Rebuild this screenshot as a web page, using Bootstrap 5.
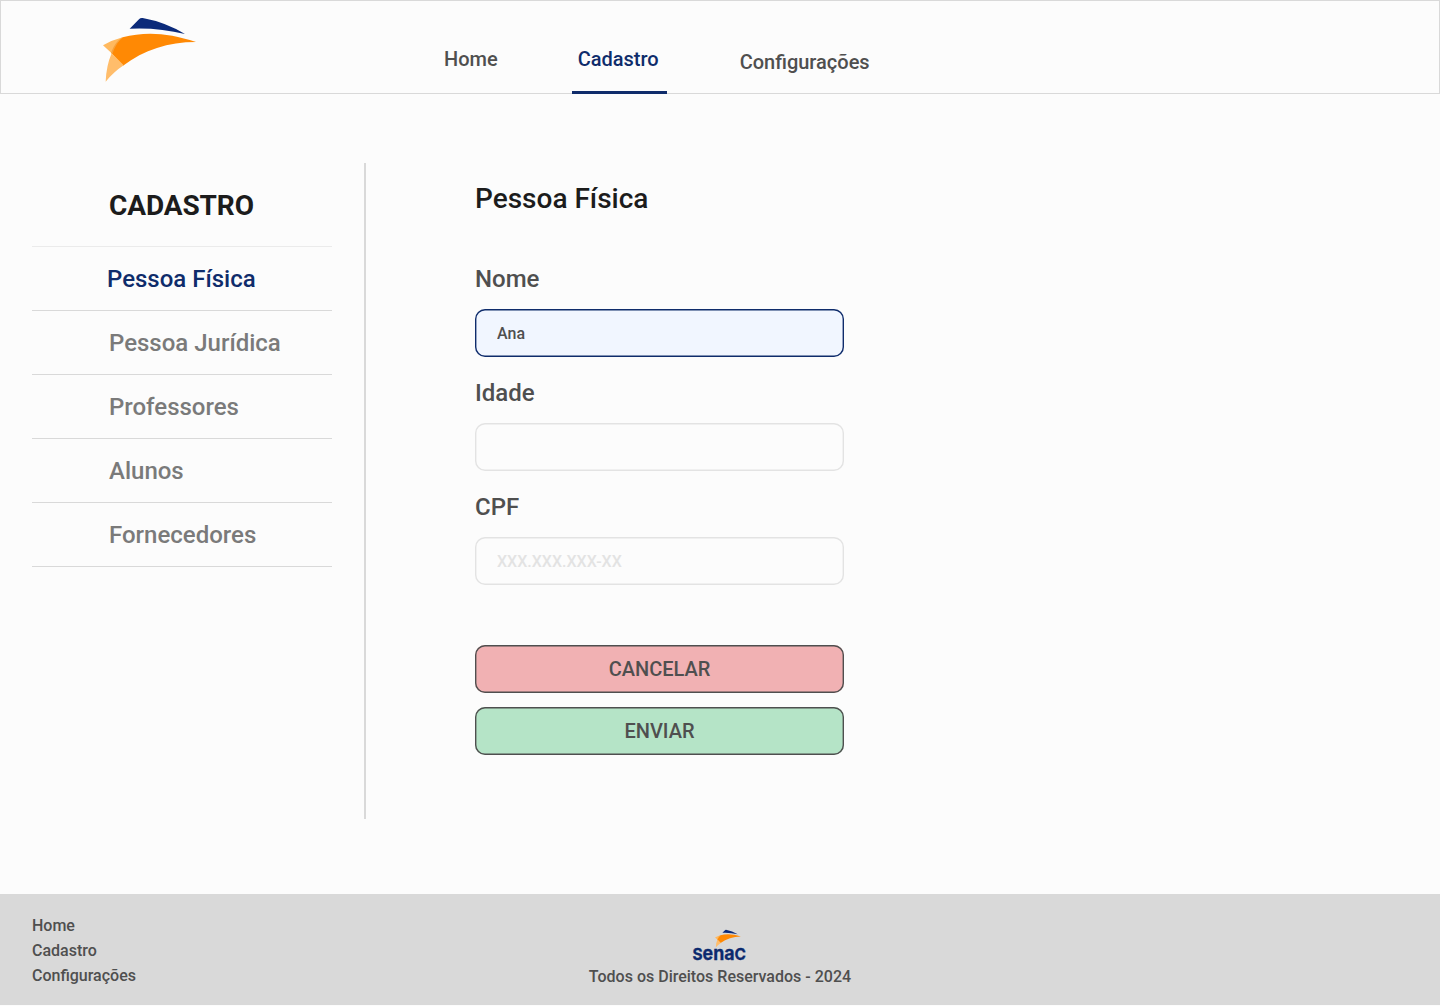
<!DOCTYPE html>
<html lang="pt-BR">
<head>
<meta charset="utf-8">
<meta name="viewport" content="width=device-width, initial-scale=1">
<title>Cadastro - Pessoa Física</title>
<link href="https://cdn.jsdelivr.net/npm/bootstrap@5.3.0/dist/css/bootstrap.min.css" rel="stylesheet">
<style>
  body { font-family: Roboto, sans-serif; font-weight: 500; color: #4f4f4f; background: #fcfcfc; height: 1005px; }
  .topbar { height: 94px; border: 1px solid #d9d9d9; padding: 0 0 0 89px; }
  .brand-mark { width: 120px; height: 86px; margin: 7px 0 0; display: block; flex: none; }
  .topnav { margin-left: 234px; height: 93px; font-size: 20px; line-height: 24px; }
  .topnav .nav-link { color: #4f4f4f; padding: 46px 0 0; }
  .topnav .nav-link.active { color: #0f2c6b; width: 95px; margin: 0 73px 0 74px; padding-left: 6px; border-bottom: 3px solid #0f2c6b; }
  .topnav .nav-link.settings { padding-top: 49px; }
  .page-area { height: 800px; padding-top: 69px; }
  .side { width: 366px; height: 656px; padding: 0 32px; border-right: 2px solid #d9d9d9; }
  .side h1 { font-size: 28px; line-height: 34px; font-weight: 700; letter-spacing: -.1px; color: #1c1c1c; margin: 0; padding: 26px 0 23px 77px; border-bottom: 1px solid #ebebeb; }
  .side .list-group-item { height: 64px; border: 0; border-bottom: 1px solid #d9d9d9 !important; border-radius: 0; background: none; color: #7a7a7a; font-size: 24px; line-height: 28px; padding: 18px 0 0 77px; }
  .side .list-group-item.active { color: #0f2c6b; padding-left: 75px; margin: 0; }
  .form-area { width: 369px; margin-left: 109px; }
  .form-area h2 { font-size: 28px; line-height: 34px; font-weight: 500; color: #1c1c1c; margin: 19px 0 49px; }
  .form-label { font-size: 24px; line-height: 28px; margin: 0 0 16px; display: block; }
  .form-control { height: 48px; border: 0; box-shadow: inset 0 0 0 1.4px #e3e3e3; border-radius: 10px; background: #fcfcfc; font-size: 16px; font-weight: 500; color: #4f4f4f; padding: 1px 22px 0; margin-bottom: 22px; }
  .form-control::placeholder { color: #e3e3e3; opacity: 1; }
  .form-control.filled { background: #f1f6ff; box-shadow: inset 0 0 0 1.4px #0f2c6b; }
  .form-area .btn { height: 48px; width: 369px; border: 0; box-shadow: inset 0 0 0 1.4px #4f4f4f; border-radius: 10px; color: #4f4f4f; font-size: 20px; font-weight: 500; line-height: 24px; padding: 0; }
  .form-actions { gap: 14px; padding-top: 38px; }
  .btn-cancelar { background: #f1b1b3; }
  .btn-enviar { background: #b5e4c7; }
  .foot { height: 111px; background: #d9d9d9; font-size: 16px; line-height: 25px; padding: 19px 32px 0; }
  .foot a { color: #4f4f4f; text-decoration: none; }
  .foot-center { padding-top: 11px; line-height: 19px; }
  .foot-logo { width: 80px; height: 44px; display: block; margin: 3px auto -4px; overflow: visible; }
</style>
</head>
<body class="d-flex flex-column">
<svg width="0" height="0" class="d-none" aria-hidden="true">
  <symbol id="sail" viewBox="0 0 360 258">
    <path fill="#0b2a7a" d="M119 62 L147 34 Q151 29 158 30 Q225 42 285 78 Q205 58 119 62Z"/>
    <path fill="#ff8904" d="M98 88 C165 70 235 74 318 102 C235 102 162 126 99 173 L63 134 C72 112 82 98 98 88Z"/>
    <path fill="#ffb95f" d="M39 112 Q67 96 98 88 Q76 105 65 136 Z"/>
    <path fill="#ffbd6b" d="M65 136 L101 172 Q72 191 47 221 Q49 172 65 136Z"/>
    <path fill="#f6a13c" d="M98 88 Q78 105 67 138 L63 134 Q76 100 98 88Z"/>
  </symbol>
</svg>

<header class="topbar d-flex align-items-start">
  <svg class="brand-mark" role="img" aria-label="Senac"><use href="#sail"/></svg>
  <nav class="nav topnav flex-nowrap">
    <a class="nav-link" href="#">Home</a>
    <a class="nav-link active" href="#">Cadastro</a>
    <a class="nav-link settings" href="#">Configurações</a>
  </nav>
</header>

<main class="page-area d-flex align-items-start">
  <aside class="side">
    <h1>CADASTRO</h1>
    <div class="list-group list-group-flush">
      <a class="list-group-item active" href="#">Pessoa Física</a>
      <a class="list-group-item" href="#">Pessoa Jurídica</a>
      <a class="list-group-item" href="#">Professores</a>
      <a class="list-group-item" href="#">Alunos</a>
      <a class="list-group-item" href="#">Fornecedores</a>
    </div>
  </aside>
  <form class="form-area">
    <h2>Pessoa Física</h2>
    <label class="form-label" for="nome">Nome</label>
    <input class="form-control filled" id="nome" type="text" value="Ana">
    <label class="form-label" for="idade">Idade</label>
    <input class="form-control" id="idade" type="text">
    <label class="form-label" for="cpf">CPF</label>
    <input class="form-control" id="cpf" type="text" placeholder="XXX.XXX.XXX-XX">
    <div class="form-actions d-flex flex-column">
      <button class="btn btn-cancelar" type="button">CANCELAR</button>
      <button class="btn btn-enviar" type="button">ENVIAR</button>
    </div>
  </form>
</main>

<footer class="foot">
  <div class="row">
    <div class="col-4 d-flex flex-column align-items-start">
      <a href="#">Home</a>
      <a href="#">Cadastro</a>
      <a href="#">Configurações</a>
    </div>
    <div class="col-4 foot-center text-center">
      <svg class="foot-logo" viewBox="0 0 80 44" role="img" aria-label="Senac">
        <use href="#sail" x="31.4" y="0" width="33.3" height="23.9"/>
        <text x="12.5" y="32.8" textLength="53.5" lengthAdjust="spacingAndGlyphs" fill="#0b2a6e" stroke="#0b2a6e" stroke-width=".3" font-family="Inter, sans-serif" font-weight="700" font-size="16.5">S<tspan font-size="19">ena</tspan>C</text>
      </svg>
      <div>Todos os Direitos Reservados - 2024</div>
    </div>
  </div>
</footer>
<script src="https://cdn.jsdelivr.net/npm/bootstrap@5.3.0/dist/js/bootstrap.bundle.min.js"></script>
</body>
</html>
